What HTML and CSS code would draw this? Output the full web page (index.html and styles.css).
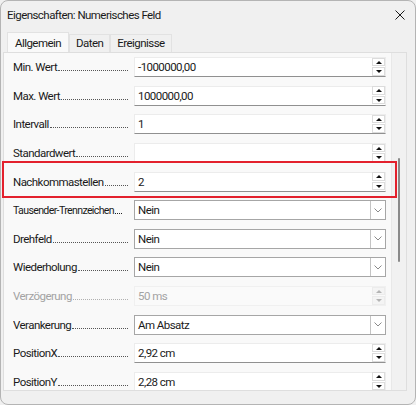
FILE: index.html
```html
<!DOCTYPE html>
<html lang="de">
<head>
    <meta charset="UTF-8">
    <title>Eigenschaften: Numerisches Feld</title>
    <link rel="stylesheet" href="styles.css">
</head>
<body>

<div class="window">
    <div class="titlebar">
        <span class="title">Eigenschaften: Numerisches Feld</span>
        <svg class="close" width="10" height="10" viewBox="0 0 10 10">
            <path d="M0.5 0.5 L9.5 9.5 M9.5 0.5 L0.5 9.5" stroke="#1a1a1a" stroke-width="1" fill="none"/>
        </svg>
    </div>

    <div class="tabs">
        <div class="tab active">Allgemein</div>
        <div class="tab">Daten</div>
        <div class="tab">Ereignisse</div>
    </div>

    <div class="panel">
        <div class="rows">
            <div class="row">
                <span class="label"><span class="text">Min. Wert</span><span class="dots"></span></span>
                <div class="field spin"><span class="value">-1000000,00</span><span class="spinner"><span class="up"></span><span class="down"></span></span></div>
            </div>
            <div class="row">
                <span class="label"><span class="text">Max. Wert</span><span class="dots"></span></span>
                <div class="field spin"><span class="value">1000000,00</span><span class="spinner"><span class="up"></span><span class="down"></span></span></div>
            </div>
            <div class="row">
                <span class="label"><span class="text">Intervall</span><span class="dots"></span></span>
                <div class="field spin"><span class="value">1</span><span class="spinner"><span class="up"></span><span class="down"></span></span></div>
            </div>
            <div class="row">
                <span class="label"><span class="text">Standardwert</span><span class="dots"></span></span>
                <div class="field spin"><span class="value"></span><span class="spinner"><span class="up"></span><span class="down"></span></span></div>
            </div>
            <div class="row">
                <span class="label"><span class="text">Nachkommastellen</span><span class="dots"></span></span>
                <div class="field spin"><span class="value">2</span><span class="spinner"><span class="up"></span><span class="down"></span></span></div>
            </div>
            <div class="row">
                <span class="label"><span class="text long">Tausender-Trennzeichen</span><span class="dots short"></span></span>
                <div class="field list"><span class="value">Nein</span><span class="drop"><svg width="8" height="5" viewBox="0 0 8 5"><path d="M0.5 0.5 L4 4 L7.5 0.5" stroke="#8a8a8a" fill="none"/></svg></span></div>
            </div>
            <div class="row">
                <span class="label"><span class="text">Drehfeld</span><span class="dots"></span></span>
                <div class="field list"><span class="value">Nein</span><span class="drop"><svg width="8" height="5" viewBox="0 0 8 5"><path d="M0.5 0.5 L4 4 L7.5 0.5" stroke="#8a8a8a" fill="none"/></svg></span></div>
            </div>
            <div class="row">
                <span class="label"><span class="text">Wiederholung</span><span class="dots"></span></span>
                <div class="field list"><span class="value">Nein</span><span class="drop"><svg width="8" height="5" viewBox="0 0 8 5"><path d="M0.5 0.5 L4 4 L7.5 0.5" stroke="#8a8a8a" fill="none"/></svg></span></div>
            </div>
            <div class="row disabled">
                <span class="label"><span class="text">Verzögerung</span><span class="dots"></span></span>
                <div class="field spin"><span class="value">50 ms</span><span class="spinner"><span class="up"></span><span class="down"></span></span></div>
            </div>
            <div class="row">
                <span class="label"><span class="text">Verankerung</span><span class="dots"></span></span>
                <div class="field list"><span class="value">Am Absatz</span><span class="drop"><svg width="8" height="5" viewBox="0 0 8 5"><path d="M0.5 0.5 L4 4 L7.5 0.5" stroke="#8a8a8a" fill="none"/></svg></span></div>
            </div>
            <div class="row">
                <span class="label"><span class="text">PositionX</span><span class="dots"></span></span>
                <div class="field spin"><span class="value">2,92 cm</span><span class="spinner"><span class="up"></span><span class="down"></span></span></div>
            </div>
            <div class="row">
                <span class="label"><span class="text">PositionY</span><span class="dots"></span></span>
                <div class="field spin"><span class="value">2,28 cm</span><span class="spinner"><span class="up"></span><span class="down"></span></span></div>
            </div>
        </div>
        <div class="scrollbar"><div class="thumb"></div></div>
    </div>

    <!-- Markierung -->
    <div class="highlight"></div>
</div>

</body>
</html>
```

FILE: styles.css
```css
html, body {
    margin: 0;
    padding: 0;
}
body {
    width: 416px;
    height: 405px;
    font-family: Roboto, "Noto Sans", sans-serif;
    font-size: 11.5px;
    letter-spacing: -0.55px;
    color: #1a1a1a;
    background: #f0f0f0;
    overflow: hidden;
}
.window {
    position: relative;
    box-sizing: border-box;
    width: 416px;
    height: 405px;
    background: #f0f0f0;
    border: 1px solid #b4b4b4;
    border-radius: 8px;
    overflow: hidden;
}
.titlebar {
    display: flex;
    align-items: center;
    justify-content: space-between;
    height: 27px;
    padding: 0 10px 0 6px;
}
.close {
    display: block;
}
.tabs {
    display: flex;
    align-items: flex-end;
    height: 20px;
    margin: 4px 0 0 6px;
}
.tab {
    box-sizing: border-box;
    height: 18px;
    line-height: 17px;
    padding: 0 6px;
    background: #f0f0f0;
    border: 1px solid #e2e2e2;
    border-bottom: none;
}
.tab.active {
    height: 20px;
    line-height: 20px;
    background: #f9f9f9;
    padding: 0 7px;
}
.panel {
    display: flex;
    box-sizing: border-box;
    height: 339px;
    margin: 0 8px 0 2px;
    background: #f9f9f9;
    border: 1px solid #dedede;
    overflow: hidden;
}
.rows {
    flex: 1;
}
.row {
    display: flex;
    align-items: center;
    height: 28.6px;
    padding: 0 5px 0 9px;
}
.label {
    display: flex;
    align-items: baseline;
    width: 115px;
    margin-right: 6px;
    white-space: nowrap;
    overflow: hidden;
}
.label .text.long {
    font-size: 10.6px;
    letter-spacing: -0.65px;
}
.dots {
    flex: 1;
    min-width: 4px;
    margin-left: 1px;
    margin-bottom: 2px;
    border-bottom: 1px dotted #555;
}
.dots.short {
    flex: 0 0 7px;
    border-bottom: 1px dotted #222;
}
.field {
    display: flex;
    align-items: center;
    box-sizing: border-box;
    flex: 1;
    height: 20px;
    background: #fff;
}
.value {
    flex: 1;
    padding-left: 3px;
}
.field.spin {
    border: 1px solid #ececec;
    border-bottom: 1px solid #909090;
}
.spinner {
    display: flex;
    flex-direction: column;
    gap: 1px;
    width: 13px;
    height: 18px;
    margin-top: -1px;
}
.spinner span {
    position: relative;
    box-sizing: border-box;
    height: 9px;
    background: #fff;
    border: 1px solid #dcdcdc;
}
.spinner .up::after,
.spinner .down::after {
    content: "";
    position: absolute;
    left: 3px;
    top: 2px;
    border-left: 3px solid transparent;
    border-right: 3px solid transparent;
}
.spinner .up::after {
    border-bottom: 3px solid #111;
}
.spinner .down::after {
    border-top: 3px solid #111;
}
.field.list {
    border: 1px solid #a6a6a6;
    height: 20px;
}
.drop {
    display: flex;
    align-items: center;
    justify-content: center;
    box-sizing: border-box;
    width: 15px;
    height: 18px;
    border-left: 1px solid #c4c4c4;
}
.row.disabled .label {
    color: #a3a3a3;
}
.row.disabled .dots {
    border-bottom-color: #b0b0b0;
}
.row.disabled .field {
    background: #fafafa;
    border: 1px solid #f0f0f0;
    color: #a3a3a3;
}
.row.disabled .spinner span {
    background: #f4f4f4;
    border-color: #ececec;
}
.row.disabled .spinner .up::after {
    border-bottom-color: #b4b4b4;
}
.row.disabled .spinner .down::after {
    border-top-color: #b4b4b4;
}
.scrollbar {
    width: 14px;
    background: #f1f1f1;
    border-left: 1px solid #e8e8e8;
}
.thumb {
    width: 2px;
    height: 104px;
    margin: 105px 0 0 6px;
    background: #8a8a8a;
    border-radius: 1px;
}
.highlight {
    position: absolute;
    left: 1px;
    top: 160px;
    width: 391px;
    height: 33px;
    border: 2px solid #e3212d;
}
```
